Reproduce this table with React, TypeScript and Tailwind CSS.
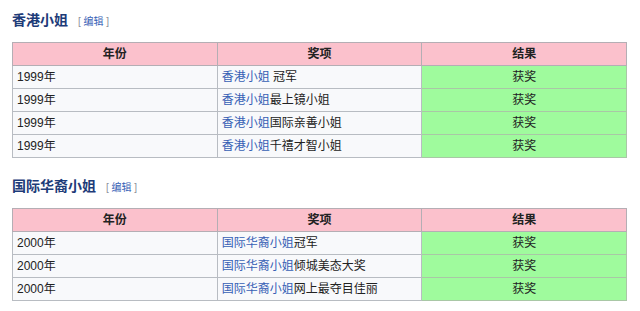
import React from "react";

const font = { fontFamily: '"Liberation Sans", "Noto Sans CJK SC", sans-serif' };

type Row = { year: string; link: string; rest: string };

function Section({ title, rows, mt }: { title: string; rows: Row[]; mt: string }) {
  return (
    <div className={mt}>
      <div className="flex items-baseline h-[24px] leading-[24px]">
        <span className="text-[14px] font-bold text-[#1d3b78]">{title}</span>
        <span className="ml-[10px] text-[10px] text-[#8a8f99]">
          [ <span className="text-[#3660b5]">编辑</span> ]
        </span>
      </div>
      <table className="mt-[10px] w-[615px] border-collapse table-fixed text-[12px] text-[#222]">
        <thead>
          <tr className="h-[23px] bg-[#fbc1cc]">
            <th className="border border-[#b4aeb4] font-bold text-center">年份</th>
            <th className="border border-[#b4aeb4] font-bold text-center">奖项</th>
            <th className="border border-[#b4aeb4] font-bold text-center">结果</th>
          </tr>
        </thead>
        <tbody>
          {rows.map((r, i) => (
            <tr key={i} className="h-[23px]">
              <td className="border border-[#b8bcc2] bg-[#f8f9fb] px-[4px]">{r.year}</td>
              <td className="border border-[#b8bcc2] bg-[#f8f9fb] px-[4px]">
                <span className="text-[#3660b5]">{r.link}</span>
                {r.rest}
              </td>
              <td className="border border-[#a9c7a6] bg-[#9ffb9d] text-center">获奖</td>
            </tr>
          ))}
        </tbody>
      </table>
    </div>
  );
}

export default function App() {
  const rows1: Row[] = [
    { year: "1999年", link: "香港小姐", rest: " 冠军" },
    { year: "1999年", link: "香港小姐", rest: "最上镜小姐" },
    { year: "1999年", link: "香港小姐", rest: "国际亲善小姐" },
    { year: "1999年", link: "香港小姐", rest: "千禧才智小姐" },
  ];
  const rows2: Row[] = [
    { year: "2000年", link: "国际华裔小姐", rest: "冠军" },
    { year: "2000年", link: "国际华裔小姐", rest: "倾城美态大奖" },
    { year: "2000年", link: "国际华裔小姐", rest: "网上最夺目佳丽" },
  ];
  return (
    <div className="w-[640px] h-[311px] bg-white pl-[12px] pt-[8px] overflow-hidden" style={font}>
      <Section title="香港小姐" rows={rows1} mt="" />
      <Section title="国际华裔小姐" rows={rows2} mt="mt-[16px]" />
    </div>
  );
}
